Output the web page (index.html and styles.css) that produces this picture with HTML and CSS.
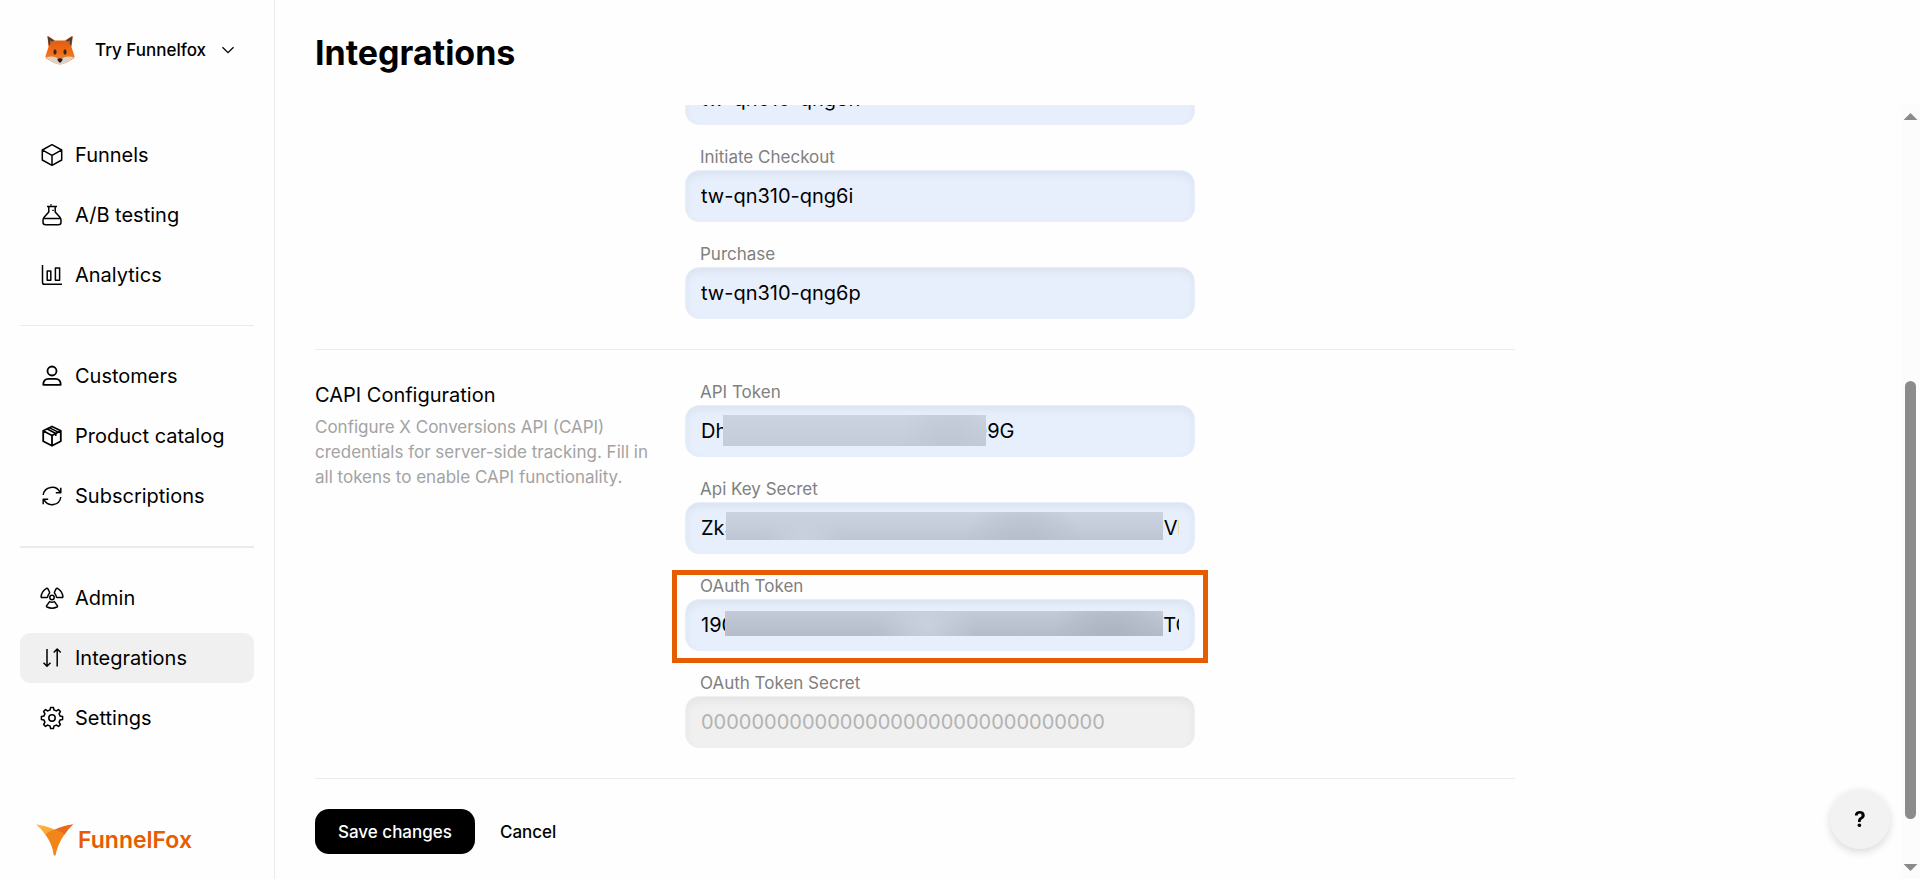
FILE: index.html
```html
<!DOCTYPE html>
<html lang="en">

<head>
    <meta charset="UTF-8">
    <meta name="viewport" content="width=device-width, initial-scale=1.0">
    <title>Integrations</title>
    <link rel="stylesheet" href="styles.css">
</head>

<body>
    <aside class="sidebar">
        <button type="button" class="workspace">
            <svg class="workspace-logo" viewBox="0 0 30 30" aria-hidden="true">
                <defs>
                    <linearGradient id="fur" x1="0" y1="0" x2="0" y2="1">
                        <stop offset="0" stop-color="#d9580f" />
                        <stop offset="0.5" stop-color="#f06a14" />
                        <stop offset="1" stop-color="#f58a32" />
                    </linearGradient>
                </defs>
                <path d="M2.5 1.5Q2 1 3.5 1.2L10 5.5H20L26.500 1.200Q28 1 27.700 2.500L26.500 12L29.500 21Q30 23 27 24.500Q20 29 15 29.500Q10 29 3 24.500Q0 23 .5 21L3.500 12Z" fill="url(#fur)" />
                <path d="M2.500 1.300L9 5.500Q5.500 7 4 11Z M27.500 1.300L21 5.500Q24.500 7 26 11Z" fill="#4c3a35" />
                <path d="M5 5.500L8.500 7L5.500 10Z M25 5.500L21.500 7L24.500 10Z" fill="#b5653f" />
                <path d="M.8 22.500Q8 20 13 23.500L15 24.500L17 23.500Q22 20 29.200 22.500Q25 26 20 28Q17 29.500 15 29.500Q13 29.500 10 28Q5 26 .8 22.500Z" fill="#ddd3cb" />
                <ellipse cx="10" cy="17" rx="1.600" ry="2.700" fill="#3a2620" />
                <ellipse cx="20" cy="17" rx="1.600" ry="2.700" fill="#3a2620" />
                <path d="M12.300 24Q15 22.600 17.700 24Q17.500 26.500 15 28Q12.500 26.500 12.300 24Z" fill="#241b1b" />
            </svg>
            <span class="workspace-name">Try Funnelfox</span>
            <svg class="chevron" viewBox="0 0 14 14" aria-hidden="true">
                <path d="M1.500 4.200L7 9.700L12.500 4.200" />
            </svg>
        </button>

        <nav class="nav">
            <a class="nav-item" href="#">
                <svg class="icon" viewBox="0 0 24 24" aria-hidden="true">
                    <path d="M12 1.700L21.700 7V17L12 22.300L2.300 17V7Z M2.600 7.200L12 12.300L21.400 7.200 M12 12.300V22" />
                </svg>
                Funnels
            </a>
            <a class="nav-item" href="#">
                <svg class="icon" viewBox="0 0 24 24" aria-hidden="true">
                    <path d="M7 3.500H17 M8.800 3.500V9L4.300 14Q3 15.500 3 17.500V19.200Q3 21.700 5.500 21.700H18.500Q21 21.700 21 19.200V17.500Q21 15.500 19.700 14L15.200 9V3.500 M3.600 15.600H20.400 M11 1.200V2.500 M13 6.800V8" />
                </svg>
                A/B testing
            </a>
            <a class="nav-item" href="#">
                <svg class="icon" viewBox="0 0 24 24" aria-hidden="true">
                    <path d="M2.500 2V19.500Q2.500 21.300 4.300 21.300H22 M7.200 8H10.800V17.200H7.200Z M15.400 5H19.600V17.200H15.400Z" />
                </svg>
                Analytics
            </a>
        </nav>
        <hr class="nav-divider">
        <nav class="nav">
            <a class="nav-item" href="#">
                <svg class="icon bold" viewBox="0 0 24 24" aria-hidden="true">
                    <circle cx="12" cy="7" r="4.500" />
                    <path d="M3.300 20.800Q3.300 14.800 8.500 14.800H15.500Q20.700 14.800 20.700 20.800Z" />
                </svg>
                Customers
            </a>
            <a class="nav-item" href="#">
                <svg class="icon" viewBox="0 0 24 24" aria-hidden="true">
                    <path stroke-width="1.800" d="M12 2.500L20.800 6.800V17.200L12 21.800L3.200 17.200V6.800Z M3.500 7L12 11.500L20.500 7 M12 11.500V21.500" />
                    <path d="M7.200 5L15.800 9.500V12 M9.600 3.900L18.200 8.200" />
                </svg>
                Product catalog
            </a>
            <a class="nav-item" href="#">
                <svg class="icon" viewBox="0 0 24 24" aria-hidden="true">
                    <path d="M3.200 11A8.900 8.900 0 0 1 20 8.300 M20.800 13A8.900 8.900 0 0 1 4 15.700 M20.800 3.800V8.800H15.800 M3.200 20.200V15.200H8.200" />
                </svg>
                Subscriptions
            </a>
        </nav>
        <hr class="nav-divider thick">
        <nav class="nav">
            <a class="nav-item" href="#">
                <svg class="icon" viewBox="0 0 24 24" aria-hidden="true">
                    <circle cx="12" cy="11.500" r="2.200" />
                    <path d="M6.500 2.300Q7.300 2 7.800 2.700L9.500 6Q9.900 6.800 9.200 7.600Q8 9 7.700 10.700Q7.500 11.500 6.700 11.500H2Q1 11.500 1.100 10.500Q1.700 5 6.500 2.300Z" />
                    <path d="M17.500 2.300Q16.700 2 16.200 2.700L14.500 6Q14.100 6.800 14.800 7.600Q16 9 16.300 10.700Q16.500 11.500 17.300 11.500H22Q23 11.500 22.900 10.500Q22.300 5 17.500 2.300Z" />
                    <path d="M9.600 15.600Q12 16.800 14.400 15.600L17.300 19.600Q17.800 20.500 17 21Q12 23.500 7 21Q6.200 20.500 6.700 19.600Z" />
                </svg>
                Admin
            </a>
            <a class="nav-item active" href="#" aria-current="page">
                <svg class="icon" viewBox="0 0 24 24" aria-hidden="true">
                    <path d="M7 3V20 M3.500 16.700L7 20.200L10.500 16.700 M17.200 20.500V3 M13.700 6.500L17.200 3L20.700 6.500" />
                </svg>
                Integrations
            </a>
            <a class="nav-item" href="#">
                <svg class="icon" viewBox="0 0 24 24" aria-hidden="true">
                    <circle cx="12" cy="12" r="3.200" />
                    <path d="M10.600 1.400H13.400L14 4Q15.200 4.300 16.200 5L18.500 3.600L20.400 5.500L19 7.800Q19.700 8.800 20 10L22.600 10.600V13.400L20 14Q19.700 15.200 19 16.200L20.400 18.500L18.500 20.400L16.200 19Q15.200 19.700 14 20L13.400 22.600H10.600L10 20Q8.800 19.700 7.800 19L5.500 20.400L3.600 18.500L5 16.200Q4.300 15.200 4 14L1.400 13.400V10.600L4 10Q4.300 8.800 5 7.800L3.600 5.500L5.500 3.600L7.800 5Q8.800 4.300 10 4Z" />
                </svg>
                Settings
            </a>
        </nav>

        <a class="brand" href="#">
            <svg class="brand-mark" viewBox="0 0 38 32" aria-hidden="true">
                <defs>
                    <linearGradient id="markLeft" x1="0" y1="0" x2="1" y2="1">
                        <stop offset="0" stop-color="#ffb84a" />
                        <stop offset="1" stop-color="#f8a02c" />
                    </linearGradient>
                </defs>
                <path d="M0 .3Q10 1.500 18.700 5.500L9.500 11Q5.500 5 0 .3Z" fill="url(#markLeft)" />
                <path d="M37.500 .3Q27 1.500 18.700 5.500L28.300 11Q32 5 37.500 .3Z" fill="#ea6a1c" />
                <path d="M9.500 10.800Q13 6.800 18.700 5.400Q24.500 6.800 28.300 10.800Q21.500 20.500 19.500 31.500H17.800Q16.500 20.500 9.500 10.800Z" fill="#f28518" />
            </svg>
            FunnelFox
        </a>
    </aside>

    <main class="main">
        <h1 class="page-title">Integrations</h1>
        <div class="viewport">
            <form class="content">
                <section class="section">
                    <div class="section-info"></div>
                    <div class="fields">
                        <div class="field">
                            <label for="addToCart">Add to Cart</label>
                            <input type="text" id="addToCart" value="tw-qn310-qng6n">
                        </div>
                        <div class="field">
                            <label for="initiateCheckout">Initiate Checkout</label>
                            <input type="text" id="initiateCheckout" value="tw-qn310-qng6i">
                        </div>
                        <div class="field">
                            <label for="purchase">Purchase</label>
                            <input type="text" id="purchase" value="tw-qn310-qng6p">
                        </div>
                    </div>
                </section>
                <section class="section">
                    <div class="section-info">
                        <h2>CAPI Configuration</h2>
                        <p>Configure X Conversions API (CAPI) credentials for server-side tracking. Fill in all tokens to enable CAPI functionality.</p>
                    </div>
                    <div class="fields">
                        <div class="field">
                            <label for="apiToken">API Token</label>
                            <input type="text" id="apiToken" value="Dh0000000000r00000000009G">
                            <span class="mask mask-token"></span>
                        </div>
                        <div class="field">
                            <label for="apiKeySecret">Api Key Secret</label>
                            <input type="text" id="apiKeySecret" value="Zk30000000000s00000000000000000000000Vl000">
                            <span class="mask mask-secret"></span>
                        </div>
                        <div class="field highlighted">
                            <label for="oauthToken">OAuth Token</label>
                            <input type="text" id="oauthToken" value="1900000000000000000000000000000000000TC000">
                            <span class="mask mask-oauth"></span>
                        </div>
                        <div class="field">
                            <label for="oauthSecret">OAuth Token Secret</label>
                            <input type="text" id="oauthSecret" placeholder="00000000000000000000000000000000">
                        </div>
                    </div>
                </section>
                <div class="actions">
                    <button type="submit" class="btn btn-primary">Save changes</button>
                    <button type="button" class="btn">Cancel</button>
                </div>
            </form>
            <div class="scrollbar" aria-hidden="true">
                <span class="arrow-up"></span>
                <span class="track-before"></span>
                <span class="thumb"></span>
                <span class="track-after"></span>
                <span class="arrow-down"></span>
            </div>
        </div>
    </main>

    <button type="button" class="help" aria-label="Help">?</button>
</body>

</html>
```
FILE: styles.css
```css
* {
    box-sizing: border-box;
}

body {
    margin: 0;
    height: 100vh;
    display: flex;
    overflow: hidden;
    background-color: #fefefe;
    color: #000;
    font-family: Inter, "Liberation Sans", sans-serif;
    font-size: 20px;
}

button,
input {
    font: inherit;
    color: inherit;
}

button {
    border: none;
    background: none;
    cursor: pointer;
}

a {
    color: inherit;
    text-decoration: none;
}

/* Sidebar */
.sidebar {
    flex: 0 0 275px;
    display: flex;
    flex-direction: column;
    padding: 30px 20px 23px;
    border-right: 1px solid #ebebeb;
}

.workspace {
    display: flex;
    align-items: center;
    height: 40px;
    margin-bottom: 60px;
    padding: 0 19px 0 25px;
    font-size: 17px;
    font-weight: 500;
}

.workspace-logo {
    width: 30px;
    height: 30px;
    margin-right: 20px;
}

.chevron {
    width: 14px;
    height: 14px;
    margin-left: auto;
    fill: none;
    stroke: #000;
    stroke-width: 1.3;
}

.nav {
    display: flex;
    flex-direction: column;
    gap: 10px;
}

.nav-item {
    display: flex;
    align-items: center;
    gap: 11px;
    height: 50px;
    padding: 0 20px;
    border-radius: 10px;
    white-space: nowrap;
}

.nav-item.active {
    background-color: #f0f0f0;
}

.icon {
    flex: none;
    width: 24px;
    height: 24px;
    fill: none;
    stroke: #000;
    stroke-width: 1.5;
    stroke-linejoin: round;
}

.icon.bold {
    stroke-width: 1.8;
}

.nav-divider {
    width: 100%;
    margin: 25px 0;
    border: none;
    border-top: 1px solid #ebebeb;
}

.nav-divider.thick {
    border-top-width: 2px;
}

.brand {
    display: flex;
    align-items: center;
    gap: 4px;
    margin-top: auto;
    padding-left: 16px;
    height: 32px;
    color: #e65c00;
    font-size: 23px;
    font-weight: 600;
}

.brand-mark {
    width: 38px;
    height: 32px;
}

/* Page */
.main {
    flex: 1;
    min-width: 0;
    display: flex;
    flex-direction: column;
}

.page-title {
    margin: 0;
    height: 105px;
    padding: 33px 40px 0;
    font-size: 34px;
    line-height: 40px;
    font-weight: 700;
}

.viewport {
    flex: 1;
    min-height: 0;
    display: flex;
}

/* Form stays scrolled to its last rows */
.content {
    flex: 1;
    display: flex;
    flex-direction: column;
    justify-content: flex-end;
    padding: 0 40px 25px;
    overflow: hidden;
}

.section {
    display: flex;
    gap: 30px;
    max-width: 1200px;
    padding: 30px 0;
    border-bottom: 1px solid #ebebeb;
}

.section-info {
    flex: 0 0 340px;
}

.section-info h2 {
    margin: 3px 0 7px;
    font-size: 20px;
    line-height: 25px;
    font-weight: 400;
}

.section-info p {
    margin: 0;
    color: #a3a3a3;
    font-size: 17px;
    line-height: 25px;
}

.fields {
    flex: 0 1 510px;
    display: flex;
    flex-direction: column;
    gap: 20px;
}

.field {
    position: relative;
    display: flex;
    flex-direction: column;
}

.field label {
    padding-left: 15px;
    color: #808080;
    font-size: 17px;
    line-height: 25px;
}

.field input {
    width: 100%;
    height: 52px;
    padding: 0 15px;
    border: 1px solid #e8effc;
    border-radius: 14px;
    background-color: #e8effc;
    box-shadow: inset 0 4px 8px rgba(0, 0, 0, 0.05);
}

.field input:placeholder-shown {
    border-color: #f0f0f0;
    background-color: #f0f0f0;
}

.field input::placeholder {
    color: #b3b3b3;
}

.highlighted::before {
    content: "";
    position: absolute;
    inset: -4px -13px -12px;
    border: 5px solid #e65c00;
    pointer-events: none;
}

/* Covers over the secret part of each token */
.mask {
    position: absolute;
    background: linear-gradient(#cbd2e0, #c1c8d5);
}

.mask-token {
    left: 38px;
    top: 35px;
    width: 263px;
    height: 31px;
    background: radial-gradient(circle at 86% 100%, #bfc6d3, transparent 50px), linear-gradient(#cbd2e0, #c5ccd9);
}

.mask-secret {
    left: 41px;
    top: 35px;
    width: 437px;
    height: 28px;
    background: radial-gradient(circle at 18% 100%, #c9d1df, transparent 40px), radial-gradient(circle at 68% 130%, #b6bdca, transparent 60px), linear-gradient(#cbd2e0, #bfc6d3);
}

.mask-oauth {
    left: 40px;
    top: 37px;
    width: 438px;
    height: 25px;
    background: radial-gradient(circle at 46% 50%, #c9d0de, transparent 50px), radial-gradient(circle at 88% 120%, #acb3c0, transparent 60px), linear-gradient(#c2c9d7, #b6bdca);
}

.actions {
    display: flex;
    padding-top: 30px;
}

.btn {
    height: 45px;
    padding: 0 25px;
    border-radius: 14px;
    font-size: 17px;
    font-weight: 500;
}

.btn-primary {
    padding: 0 23px;
    background-color: #000;
    color: #fff;
}

/* Scrollbar */
.scrollbar {
    flex: 0 0 19px;
    display: flex;
    flex-direction: column;
    align-items: center;
    padding: 8px 0;
    background-color: #fcfcfc;
}

.arrow-up,
.arrow-down {
    width: 14px;
    height: 7px;
    background-color: #8b8b8b;
    clip-path: polygon(50% 0, 100% 100%, 0 100%);
}

.arrow-down {
    clip-path: polygon(0 0, 100% 0, 50% 100%);
}

.track-before {
    flex: 261;
}

.thumb {
    flex: 438;
    width: 11px;
    border-radius: 6px;
    background-color: #8b8b8b;
}

.track-after {
    flex: 45;
}

.help {
    position: fixed;
    right: 30px;
    bottom: 30px;
    width: 60px;
    height: 60px;
    padding: 0;
    border-radius: 50%;
    background-color: #f2f2f2;
    box-shadow: 0 3px 8px rgba(0, 0, 0, 0.15);
    font-size: 21px;
    font-weight: 700;
}
```
